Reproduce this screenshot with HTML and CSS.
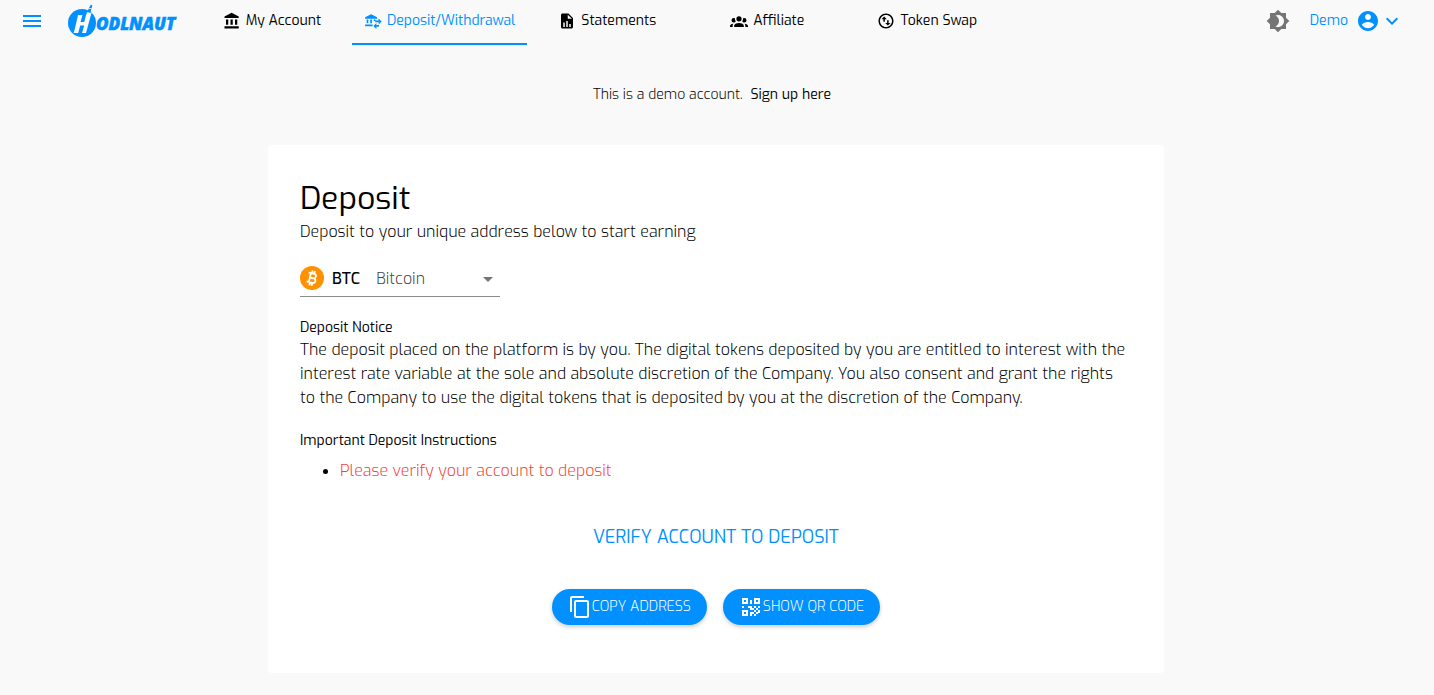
FILE: index.html
```
<!DOCTYPE html>
<html lang="en">
<head>
    <meta charset="UTF-8">
    <meta name="viewport" content="width=device-width, initial-scale=1.0">
    <title>Hodlnaut - Deposit</title>
    <link rel="stylesheet" href="styles.css">
</head>
<body>
    <header class="topbar">
        <button class="icon-btn menu-btn" aria-label="Menu">
            <svg width="24" height="24" viewBox="0 0 24 24"><path d="M3 18h18v-2H3v2zm0-5h18v-2H3v2zm0-7v2h18V6H3z"/></svg>
        </button>
        <a class="logo" href="#" aria-label="Hodlnaut">
            <svg width="110" height="34" viewBox="0 0 110 34">
                <ellipse cx="14" cy="19" rx="14" ry="14"/>
                <path class="logo-cut" d="M10 11h4.500l-2 7h3.700L18.500 9.500l1.500-2 3.500 1.500L18 29h-4l2.200-7.500h-4l-2 7.500H5.500l1.300-4z"/>
                <path d="M19.500 8l1.200-3.500 2.600.7-1 3.800zM21 3.800L22.800.8l1.400.3-.4 3.500z"/>
                <text class="logo-text" x="28" y="26">ODLNAUT</text>
            </svg>
        </a>
        <nav class="tabs">
            <a class="tab" href="#">
                <svg width="18" height="18" viewBox="0 0 24 24"><path d="M4 10v7h3v-7H4zm6 0v7h3v-7h-3zM2 22h19v-3H2v3zm14-12v7h3v-7h-3zm-4.500-9L2 6v2h19V6l-9.500-5z"/></svg>
                My Account
            </a>
            <a class="tab active" href="#">
                <svg width="18" height="18" viewBox="0 0 24 24"><path d="M9.500 3L1.500 7v2h16V7zM3.500 10h2.300v5H3.500zM8.300 10h2.300v5H8.300zM13 10h2.300v2H13zM1.500 16.500h10V19h-10zM19.500 8.500l4 4-4 4v-2.700H15v-2.600h4.500zM16.500 14.500v2.700H20v2.600h-3.500v2.700l-4-4z"/></svg>
                Deposit/Withdrawal
            </a>
            <a class="tab" href="#">
                <svg width="18" height="18" viewBox="0 0 24 24"><path fill-rule="evenodd" d="M14 2H6c-1.100 0-2 .9-2 2v16c0 1.100.9 2 2 2h12c1.100 0 2-.9 2-2V8zM13 3.500L18.500 9H13zM7 20v-6h2v6zm4 0v-8h2v8zm4 0v-4h2v4z"/></svg>
                Statements
            </a>
            <a class="tab" href="#">
                <svg width="18" height="18" viewBox="0 0 24 24"><path d="M12 5.500A3.500 3.500 0 0 1 15.500 9 3.500 3.500 0 0 1 12 12.500 3.500 3.500 0 0 1 8.500 9 3.500 3.500 0 0 1 12 5.500M5 8c.56 0 1.080.15 1.530.42-.15 1.430.27 2.850 1.130 3.960C7.160 13.340 6.160 14 5 14a3 3 0 0 1-3-3 3 3 0 0 1 3-3m14 0a3 3 0 0 1 3 3 3 3 0 0 1-3 3c-1.160 0-2.160-.66-2.660-1.620a5.540 5.540 0 0 0 1.130-3.960C17.920 8.150 18.440 8 19 8M5.500 18.250c0-2.070 2.910-3.750 6.500-3.750s6.500 1.680 6.500 3.750V20h-13zM0 20v-1.500c0-1.390 1.890-2.560 4.450-2.900-.59.68-.95 1.620-.95 2.650V20zm24 0h-3.500v-1.750c0-1.030-.36-1.970-.95-2.650 2.560.34 4.450 1.510 4.450 2.900z"/></svg>
                Affiliate
            </a>
            <a class="tab" href="#">
                <svg width="18" height="18" viewBox="0 0 24 24"><path d="M12 4c4.410 0 8 3.590 8 8s-3.590 8-8 8-8-3.590-8-8 3.590-8 8-8m0-2C6.480 2 2 6.480 2 12s4.480 10 10 10 10-4.480 10-10S17.520 2 12 2zM9.500 6L6 9.500h2.500V13h2V9.500H13zM14.500 18l3.500-3.500h-2.500V11h-2v3.500H11z"/></svg>
                Token Swap
            </a>
        </nav>
        <div class="account">
            <button class="icon-btn theme-btn" aria-label="Toggle theme">
                <svg width="24" height="24" viewBox="0 0 24 24"><path d="M20 8.690V4h-4.690L12 .69 8.690 4H4v4.690L.69 12 4 15.310V20h4.690L12 23.310 15.310 20H20v-4.690L23.310 12 20 8.690zM12 18c-.89 0-1.740-.2-2.500-.55C11.560 16.500 13 14.420 13 12s-1.440-4.500-3.500-5.450C10.260 6.200 11.110 6 12 6c3.310 0 6 2.690 6 6s-2.690 6-6 6z"/></svg>
            </button>
            <button class="user-btn">
                <span class="user-name">Demo</span>
                <svg width="24" height="24" viewBox="0 0 24 24"><path d="M12 2C6.480 2 2 6.480 2 12s4.480 10 10 10 10-4.480 10-10S17.520 2 12 2zm0 3c1.660 0 3 1.340 3 3s-1.340 3-3 3-3-1.340-3-3 1.340-3 3-3zm0 14.200c-2.500 0-4.710-1.280-6-3.220.03-1.990 4-3.080 6-3.080 1.990 0 5.970 1.090 6 3.080-1.290 1.940-3.500 3.220-6 3.220z"/></svg>
                <svg width="24" height="24" viewBox="0 0 24 24"><path d="M7.410 8.590L12 13.170l4.590-4.580L18 10l-6 6-6-6z"/></svg>
            </button>
        </div>
    </header>

    <p class="demo-note">This is a demo account. <a href="#">Sign up here</a></p>

    <main class="card">
        <h1>Deposit</h1>
        <p class="text">Deposit to your unique address below to start earning</p>

        <div class="coin-field">
            <svg width="24" height="24" viewBox="0 0 24 24">
                <circle class="coin-bg" cx="12" cy="12" r="12"/>
                <g class="coin-sign" transform="rotate(13 12 12)">
                    <path d="M7.500 7.500h5.700a2.200 2.200 0 0 1 0 4.500h-3M9.700 12h4a2.300 2.300 0 0 1 0 4.600H7.500M9.800 7.500v9M11 4.500v3M13.300 4.500v3M11 16.600v3M13.300 16.600v3"/>
                </g>
            </svg>
            <label for="coin">BTC</label>
            <div class="select-wrap">
                <select id="coin">
                    <option>Bitcoin</option>
                </select>
                <svg class="arrow" width="24" height="24" viewBox="0 0 24 24"><path d="M7 10l5 5 5-5z"/></svg>
            </div>
        </div>

        <h2>Deposit Notice</h2>
        <p class="text">The deposit placed on the platform is by you. The digital tokens deposited by you are entitled to interest with the interest rate variable at the sole and absolute discretion of the Company. You also consent and grant the rights to the Company to use the digital tokens that is deposited by you at the discretion of the Company.</p>

        <h2>Important Deposit Instructions</h2>
        <ul>
            <li><span>Please verify your account to deposit</span></li>
        </ul>

        <a class="verify" href="#">VERIFY ACCOUNT TO DEPOSIT</a>

        <div class="actions">
            <button class="pill">
                <svg width="24" height="24" viewBox="0 0 24 24"><path d="M16 1H4c-1.100 0-2 .9-2 2v14h2V3h12V1zm3 4H8c-1.100 0-2 .9-2 2v14c0 1.100.9 2 2 2h11c1.100 0 2-.9 2-2V7c0-1.100-.9-2-2-2zm0 16H8V7h11v14z"/></svg>
                COPY ADDRESS
            </button>
            <button class="pill">
                <svg width="24" height="24" viewBox="0 0 24 24"><path fill-rule="evenodd" d="M3 3h6v6H3zm2 2v2h2V5zM15 3h6v6h-6zm2 2v2h2V5zM3 15h6v6H3zm2 2v2h2v-2zM11 5h2v4h-2zM3 11h2v2H3zM9 11h4v4h-2v-2H9zM15 11h2v2h-2zM19 11h2v2h-2zM13 13h2v2h-2zM17 13h2v2h-2zM11 17h4v2h-2v2h-2zM15 15h2v2h-2zM19 15h2v3h-2zM17 17h2v2h-2zM15 19h2v2h-2z"/></svg>
                SHOW QR CODE
            </button>
        </div>
    </main>
</body>
</html>
```
FILE: styles.css
```
* {
    box-sizing: border-box;
    margin: 0;
    padding: 0;
}

body {
    padding-right: 2px;
    background-color: #f9f9f9;
    color: #000;
    font-family: "Exo", "Exo 2", "Open Sans", sans-serif;
    font-size: 16px;
    font-weight: 300;
    line-height: 24px;
}

a {
    color: inherit;
    text-decoration: none;
}

button,
select {
    border: none;
    background: none;
    font: inherit;
    color: inherit;
    cursor: pointer;
}

svg {
    display: block;
    flex-shrink: 0;
    fill: currentColor;
}

.topbar {
    display: flex;
    align-items: flex-start;
    height: 45px;
    padding: 0 28px 0 20px;
}

.icon-btn {
    padding-top: 9px;
}

.menu-btn,
.logo {
    color: #0090ff;
}

.logo {
    width: 148px;
    padding: 4px 0 0 24px;
}

.logo-cut {
    fill: #f9f9f9;
}

.logo-text {
    font-family: "Open Sans", sans-serif;
    font-size: 17px;
    font-style: italic;
    font-weight: 800;
    stroke: #0090ff;
    stroke-width: 0.5;
}

.tabs {
    display: flex;
    height: 45px;
}

.tab {
    display: flex;
    justify-content: center;
    gap: 5px;
    min-width: 160px;
    padding: 9px 12px 8px;
    font-size: 14px;
    font-weight: 400;
    white-space: nowrap;
}

.tab svg {
    margin-top: 3px;
}

.tab.active {
    border-bottom: 2px solid #0090ff;
    color: #0090ff;
}

.account {
    display: flex;
    gap: 20px;
    margin-left: auto;
}

.theme-btn {
    color: #757575;
}

.user-btn {
    display: flex;
    padding-top: 9px;
    color: #0090ff;
    font-size: 14px;
    font-weight: 400;
    line-height: 24px;
}

.user-name {
    margin-right: 8px;
}

.demo-note {
    margin-top: 38px;
    padding-right: 8px;
    font-size: 14px;
    text-align: center;
}

.demo-note a {
    margin-left: 4px;
    font-weight: 400;
}

.card {
    width: 100%;
    max-width: 896px;
    margin: 38px auto 22px;
    padding: 32px 32px 48px;
    border-radius: 4px;
    background-color: #fff;
}

h1 {
    margin-bottom: 1px;
    font-size: 32px;
    font-weight: 400;
    line-height: 42px;
}

h2 {
    margin-top: 21px;
    font-size: 14px;
    font-weight: 400;
    line-height: 20px;
}

.coin-field {
    display: flex;
    align-items: center;
    gap: 8px;
    width: 200px;
    height: 38px;
    margin-top: 15px;
    border-bottom: 1px solid #8c8c8c;
}

.coin-bg {
    fill: #ff9100;
}

.coin-sign {
    fill: none;
    stroke: #fff;
    stroke-width: 1.8;
}

.coin-field label {
    padding-top: 2px;
    font-weight: 500;
}

.select-wrap {
    position: relative;
    flex: 1;
}

.select-wrap select {
    display: block;
    width: 100%;
    padding: 2px 0 0 8px;
    appearance: none;
    color: #444;
}

.arrow {
    position: absolute;
    top: 2px;
    right: 0;
    color: #757575;
    pointer-events: none;
}

ul {
    margin-top: 8px;
    padding-left: 40px;
}

li span {
    color: #f44336;
}

.verify {
    display: block;
    width: fit-content;
    margin: 42px auto 0;
    color: #0090ff;
    font-size: 18px;
    font-weight: 400;
}

.actions {
    display: flex;
    justify-content: center;
    gap: 16px;
    margin-top: 40px;
}

.pill {
    display: flex;
    align-items: center;
    height: 36px;
    padding: 0 16px;
    border-radius: 18px;
    background-color: #0090ff;
    color: #fff;
    font-size: 14px;
    box-shadow: 0 2px 4px rgba(0, 0, 0, 0.2);
}
```
